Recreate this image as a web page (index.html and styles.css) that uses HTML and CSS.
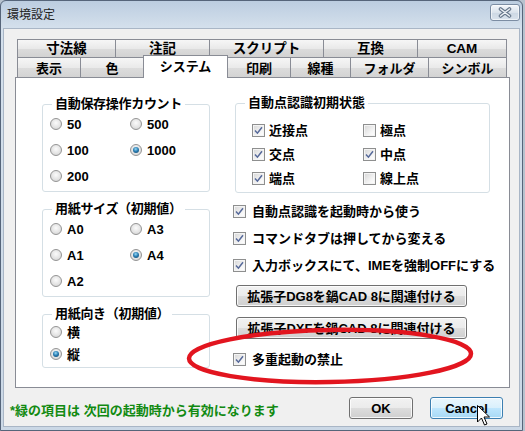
FILE: index.html
```html
<!DOCTYPE html>
<html lang="ja">
<head>
<meta charset="utf-8">
<title>環境設定</title>
<link rel="stylesheet" href="styles.css">
</head>
<body>
<div class="stage">
  <div class="window">
    <div class="titlebar">
      <span class="title">環境設定</span>
      <button class="close" aria-label="閉じる">
        <svg width="14" height="11" viewBox="0 0 14 11"><path d="M2.5 2 L11.5 9 M11.5 2 L2.5 9" stroke="#67778b" stroke-width="3.6" stroke-linecap="round"/><path d="M2.5 2 L11.5 9 M11.5 2 L2.5 9" stroke="#eef2f6" stroke-width="1.4" stroke-linecap="round"/></svg>
      </button>
    </div>
    <div class="client">
      <div class="tabs">
        <div class="tabrow back">
          <div class="tab">寸法線</div>
          <div class="tab">注記</div>
          <div class="tab">スクリプト</div>
          <div class="tab">互換</div>
          <div class="tab">CAM</div>
        </div>
        <div class="tabrow front">
          <div class="tab">表示</div>
          <div class="tab">色</div>
          <div class="tab selected">システム</div>
          <div class="tab">印刷</div>
          <div class="tab">線種</div>
          <div class="tab">フォルダ</div>
          <div class="tab">シンボル</div>
        </div>
      </div>
      <div class="panel">
        <div class="col-left">
          <fieldset class="group">
            <legend>自動保存操作カウント</legend>
            <div class="opts">
              <label class="item"><span class="radio"></span>50</label>
              <label class="item"><span class="radio"></span>500</label>
              <label class="item"><span class="radio"></span>100</label>
              <label class="item"><span class="radio on"></span>1000</label>
              <label class="item"><span class="radio"></span>200</label>
            </div>
          </fieldset>
          <fieldset class="group">
            <legend>用紙サイズ（初期値）</legend>
            <div class="opts">
              <label class="item"><span class="radio"></span>A0</label>
              <label class="item"><span class="radio"></span>A3</label>
              <label class="item"><span class="radio"></span>A1</label>
              <label class="item"><span class="radio on"></span>A4</label>
              <label class="item"><span class="radio"></span>A2</label>
            </div>
          </fieldset>
          <fieldset class="group">
            <legend>用紙向き（初期値）</legend>
            <div class="opts single">
              <label class="item"><span class="radio"></span>横</label>
              <label class="item"><span class="radio on"></span>縦</label>
            </div>
          </fieldset>
        </div>
        <div class="col-right">
          <fieldset class="group snap">
            <legend>自動点認識初期状態</legend>
            <div class="opts checks">
              <label class="item tight"><span class="check on"><svg width="9" height="9" viewBox="0 0 9 9"><path d="M1 4.6 L3.4 7.2 L8 1.2" fill="none" stroke="#56699a" stroke-width="1.5"/></svg></span>近接点</label>
              <label class="item tight"><span class="check"></span>極点</label>
              <label class="item tight"><span class="check on"><svg width="9" height="9" viewBox="0 0 9 9"><path d="M1 4.6 L3.4 7.2 L8 1.2" fill="none" stroke="#56699a" stroke-width="1.5"/></svg></span>交点</label>
              <label class="item tight"><span class="check on"><svg width="9" height="9" viewBox="0 0 9 9"><path d="M1 4.6 L3.4 7.2 L8 1.2" fill="none" stroke="#56699a" stroke-width="1.5"/></svg></span>中点</label>
              <label class="item tight"><span class="check on"><svg width="9" height="9" viewBox="0 0 9 9"><path d="M1 4.6 L3.4 7.2 L8 1.2" fill="none" stroke="#56699a" stroke-width="1.5"/></svg></span>端点</label>
              <label class="item tight"><span class="check"></span>線上点</label>
            </div>
          </fieldset>
          <div class="toggles">
            <label class="item"><span class="check on"><svg width="9" height="9" viewBox="0 0 9 9"><path d="M1 4.6 L3.4 7.2 L8 1.2" fill="none" stroke="#56699a" stroke-width="1.5"/></svg></span>自動点認識を起動時から使う</label>
            <label class="item"><span class="check on"><svg width="9" height="9" viewBox="0 0 9 9"><path d="M1 4.6 L3.4 7.2 L8 1.2" fill="none" stroke="#56699a" stroke-width="1.5"/></svg></span>コマンドタブは押してから変える</label>
            <label class="item"><span class="check on"><svg width="9" height="9" viewBox="0 0 9 9"><path d="M1 4.6 L3.4 7.2 L8 1.2" fill="none" stroke="#56699a" stroke-width="1.5"/></svg></span>入力ボックスにて、IMEを強制OFFにする</label>
          </div>
          <button class="btn wide">拡張子DG8を鍋CAD 8に関連付ける</button>
          <button class="btn wide">拡張子DXFを鍋CAD 8に関連付ける</button>
          <label class="item solo"><span class="check on"><svg width="9" height="9" viewBox="0 0 9 9"><path d="M1 4.6 L3.4 7.2 L8 1.2" fill="none" stroke="#56699a" stroke-width="1.5"/></svg></span>多重起動の禁止</label>
        </div>
      </div>
      <div class="footer">
        <span class="note">*緑の項目は 次回の起動時から有効になります</span>
        <div class="actions">
          <button class="btn ok">OK</button>
          <button class="btn cancel hot">Cancel</button>
        </div>
      </div>
    </div>
  </div>
  <svg class="annotation" width="525" height="431" viewBox="0 0 525 431">
    <ellipse cx="330" cy="356" rx="141" ry="26" fill="none" stroke="#e2151f" stroke-width="4.5" transform="rotate(-1 330 356)"/>
  </svg>
  <svg class="cursor" width="15" height="24" viewBox="0 0 15 24">
    <path d="M1.5 1.5 L1.5 18 L5.5 14 L8.5 21 L11 20 L8 13 L13.5 13 Z" fill="#fff" stroke="#000" stroke-width="1" stroke-linejoin="round"/>
  </svg>
</div>
</body>
</html>
```
FILE: styles.css
```css
* { box-sizing: border-box; }

body {
  margin: 0;
  background: #b7c2ce;
  font: bold 13px "Liberation Sans", "Noto Sans CJK JP", sans-serif;
  color: #000;
}

.stage {
  position: relative;
  width: 525px;
  height: 431px;
  overflow: hidden;
}

.window {
  width: 523px;
  height: 431px;
  border: 1px solid #56657a;
  border-radius: 6px 6px 0 0;
  background: linear-gradient(to bottom, #bccde0 0, #d4e0ec 27px, #cbd8e6 100%);
  padding: 0 2px 3px;
  display: flex;
  flex-direction: column;
}

.titlebar {
  height: 27px;
  flex: none;
  display: flex;
  align-items: center;
  justify-content: space-between;
  padding-left: 4px;
}

.title {
  font: 400 12px "Noto Sans CJK JP", sans-serif;
  color: #222;
  margin-top: -2px;
}

.close {
  width: 30px;
  height: 17px;
  margin-top: -4px;
  padding: 0;
  border: 1px solid #7c8da3;
  border-radius: 3px;
  background: linear-gradient(#f4f7fb, #dbe3ec 50%, #cdd8e4 51%, #d9e2ec);
  box-shadow: inset 0 0 0 1px rgba(255,255,255,0.6);
  display: flex;
  align-items: center;
  justify-content: center;
}

.client {
  flex: 1;
  background: #f0f0f0;
  border: 1px solid #a9b6c6;
  padding: 10px 9px 0 11px;
  display: flex;
  flex-direction: column;
}

/* tabs */
.tabs { margin: 0 2px; }

.tabrow { display: grid; }
.tabrow.back {
  grid-template-columns: 98px 94px 114px 94px 90px;
  height: 18px;
}
.tabrow.front {
  grid-template-columns: 63px 63px 85px 62px 60px 78px 79px;
  height: 20px;
}

.tab {
  border: 1px solid #898c95;
  border-right: none;
  border-bottom: none;
  background: linear-gradient(#f6f6f6, #e9e9e9 50%, #dcdcdc 51%, #d2d2d2);
  display: flex;
  align-items: center;
  justify-content: center;
  font-size: 13px;
  line-height: 1;
  padding-top: 1px;
}
.tabrow.back .tab { font-size: 13.5px; }
.tab:last-child { border-right: 1px solid #898c95; }

.tab.selected {
  background: #fff;
  border-right: 1px solid #898c95;
  margin-top: -2px;
  height: 23px;
  align-self: start;
  position: relative;
  z-index: 1;
  padding-bottom: 2px;
}
.tab.selected + .tab { border-left: none; }

/* panel */
.panel {
  height: 311px;
  flex: none;
  border: 1px solid #898c95;
  background: #fff;
  display: flex;
  padding: 19px 0 0 26px;
}

.col-left {
  width: 168px;
  display: flex;
  flex-direction: column;
  gap: 10px;
}

.col-right {
  width: 257px;
  margin-left: 23px;
  margin-top: -1px;
  display: flex;
  flex-direction: column;
  align-items: flex-start;
}

.group {
  margin: 0;
  min-width: 0;
  border: 1px solid #d5dfe5;
  border-radius: 3px;
  padding: 0 0 2px 7px;
}

.group legend {
  padding: 0 3px;
  margin-left: 2px;
  line-height: 14px;
  font-size: 13px;
  letter-spacing: -0.3px;
}

.group.snap {
  width: 255px;
  margin-left: 2px;
  padding: 8px 0 2px 16px;
}
.group.snap legend { margin-left: -7px; letter-spacing: 0; }

.opts {
  display: grid;
  grid-template-columns: 80px 1fr;
  grid-auto-rows: 26px;
  align-items: center;
}
.opts.single {
  grid-template-columns: 1fr;
  grid-auto-rows: 22px;
}
.opts.checks {
  grid-template-columns: 111px 1fr;
  grid-auto-rows: 24px;
}

.item {
  display: flex;
  align-items: center;
  gap: 5px;
  line-height: 1;
  white-space: nowrap;
}
.item.tight { gap: 4px; }

.radio {
  width: 12px;
  height: 12px;
  flex: none;
  border-radius: 50%;
  border: 1px solid #949494;
  background: radial-gradient(circle at 50% 40%, #fbfbfb 0, #e4e4e4 55%, #cdcdcd 100%);
  position: relative;
}
.radio.on::after {
  content: "";
  position: absolute;
  inset: 2px;
  border-radius: 50%;
  background: radial-gradient(circle at 45% 35%, #9adaf6 0, #2b7fb4 45%, #0c3b5f 100%);
}

.check {
  width: 13px;
  height: 13px;
  flex: none;
  border: 1px solid #8e8f8f;
  background: linear-gradient(135deg, #d6d6d6, #f7f7f7 70%, #ffffff);
  box-shadow: inset 0 0 0 1px #f4f4f4;
  display: flex;
  align-items: center;
  justify-content: center;
}

.toggles {
  margin-top: 5px;
  display: grid;
  grid-auto-rows: 27px;
  align-items: center;
}
.toggles .item { gap: 6px; }

.btn {
  font: inherit;
  color: #000;
  padding: 0;
  border: 1px solid #707070;
  border-radius: 3px;
  background: linear-gradient(#f2f2f2 0, #ebebeb 50%, #dddddd 51%, #cfcfcf 100%);
  box-shadow: inset 0 0 0 1px rgba(255,255,255,0.8);
  line-height: 1;
}

.btn.wide {
  width: 231px;
  height: 22px;
  margin: 6px 0 0 3px;
}
.btn.wide + .btn.wide { margin-top: 10px; }

.item.solo {
  height: 20px;
  margin-top: 10px;
  gap: 6px;
}

/* footer */
.footer {
  margin: 9px 0 0 -5px;
  padding-right: 7px;
  height: 22px;
  display: flex;
  align-items: center;
  justify-content: space-between;
}

.note {
  color: #128a12;
  font-size: 13px;
  margin-top: 2px;
}

.actions {
  display: flex;
  gap: 17px;
}

.btn.ok { width: 64px; height: 22px; }
.btn.cancel { width: 73px; height: 22px; }

.btn.hot {
  border-color: #3c7fb1;
  background: linear-gradient(#eaf6fd 0, #d9f0fc 50%, #bee6fd 51%, #a7d9f5 100%);
}

/* overlays */
.annotation {
  position: absolute;
  left: 0;
  top: 0;
  pointer-events: none;
}

.cursor {
  position: absolute;
  left: 476px;
  top: 404px;
  pointer-events: none;
}
```
